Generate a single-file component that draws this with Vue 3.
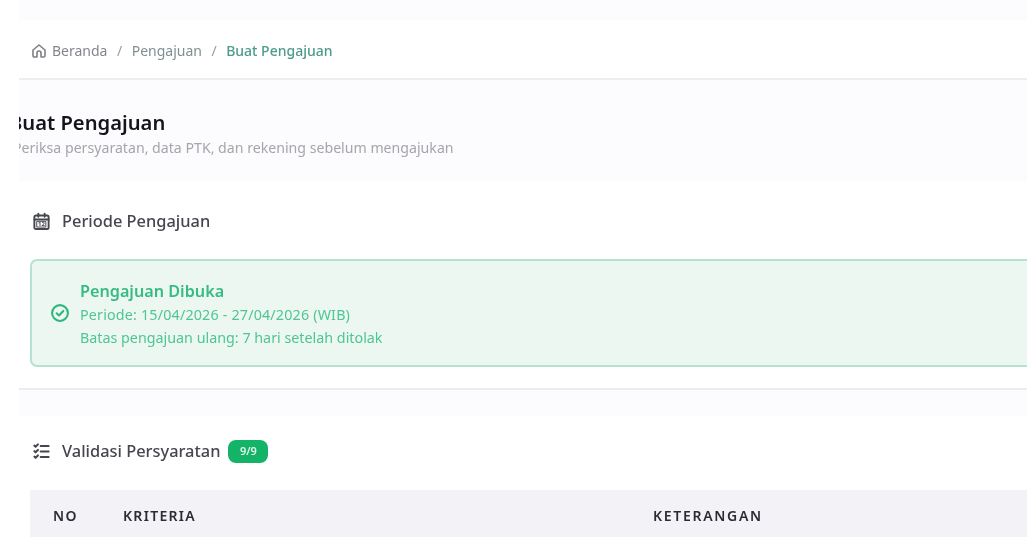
<template>
  <div class="app">
    <aside class="side"></aside>
    <main class="main">
      <div class="inner">
        <div class="topbar"></div>
        <nav class="crumbs">
          <svg class="home" width="16" height="16" viewBox="0 0 24 24" fill="none" stroke="currentColor" stroke-width="2.400" stroke-linecap="round" stroke-linejoin="round">
            <path d="M3 10.500 12 3l9 7.500V19a2 2 0 0 1-2 2h-4v-6a3 3 0 0 0-6 0v6H5a2 2 0 0 1-2-2z"/>
          </svg>
          <span>Beranda</span>
          <span class="sep">/</span>
          <span class="mid">Pengajuan</span>
          <span class="sep">/</span>
          <span class="now">Buat Pengajuan</span>
        </nav>

        <header class="head">
          <h1>Buat Pengajuan</h1>
          <p>Periksa persyaratan, data PTK, dan rekening sebelum mengajukan</p>
        </header>

        <section class="card period">
          <h2>
            <svg width="19" height="19" viewBox="0 0 24 24" fill="none" stroke="currentColor" stroke-width="2.400" stroke-linecap="round" stroke-linejoin="round">
              <rect x="3" y="4.500" width="18" height="17" rx="2"/>
              <path d="M3 9.500h18M8 2v4M16 2v4"/>
              <rect x="6.500" y="11.800" width="11" height="7.200" stroke-width="1.200"/>
              <text x="12" y="18" text-anchor="middle" class="cal-num">12</text>
            </svg>
            Periode Pengajuan
          </h2>
          <div class="alert">
            <svg class="check" width="20" height="20" viewBox="0 0 24 24" fill="none" stroke="currentColor" stroke-width="2.500" stroke-linecap="round" stroke-linejoin="round">
              <circle cx="12" cy="12" r="9.500"/>
              <path d="m8 12.300 2.800 2.700L16 9.500"/>
            </svg>
            <div class="alert-text">
              <strong>Pengajuan Dibuka</strong>
              <span class="range">Periode: 15/04/2026 - 27/04/2026 (WIB)</span>
              <span>Batas pengajuan ulang: 7 hari setelah ditolak</span>
            </div>
          </div>
        </section>

        <section class="card valid">
          <h2>
            <svg width="19" height="19" viewBox="0 0 24 24" fill="none" stroke="currentColor" stroke-width="2.600" stroke-linecap="round" stroke-linejoin="round">
              <path d="m3 4.500 1.500 1.500L7.500 3M3 11.500 4.500 13l3-3M3 18.500 4.500 20l3-3"/>
              <path d="M11 5h10M11 12h10M11 19h10"/>
            </svg>
            Validasi Persyaratan
            <span class="badge">9/9</span>
          </h2>
          <div class="thead">
            <span class="c-no">NO</span>
            <span class="c-kr">KRITERIA</span>
            <span class="c-ket">KETERANGAN</span>
          </div>
        </section>
      </div>
    </main>
  </div>
</template>

<script setup>
</script>

<style>
html, body {
  margin: 0;
  background: #fff;
  overflow: hidden;
}
</style>

<style scoped>
.app {
  display: flex;
  width: 1027px;
  height: 537px;
  overflow: hidden;
  font-family: "Noto Sans", "Open Sans", sans-serif;
  background: #fff;
}

.side {
  flex: 0 0 19px;
  background: #fff;
}

.main {
  flex: 1;
  min-width: 0;
  overflow: hidden;
  background: #fcfbfd;
}

.inner {
  width: 1100px;
  filter: blur(0.35px);
}

.topbar {
  height: 20px;
}

.crumbs {
  display: flex;
  align-items: center;
  height: 60px;
  padding: 3px 0 0 13px;
  background: #fff;
  border-bottom: 2px solid #eeeef0;
  box-sizing: border-box;
  font-size: 14px;
  color: #84868c;
}

.home {
  margin-right: 5px;
  margin-left: -1px;
  color: #7d7f85;
}

.sep {
  margin: 0 9.500px;
  color: #9a9ca3;
}

.mid {
  color: #7f9091;
}

.now {
  color: #4e9a8c;
  font-weight: 500;
}

.head {
  height: 102px;
  box-sizing: border-box;
  padding-top: 29px;
}

.head h1 {
  margin: 0 0 0 -10px;
  font-size: 20.200px;
  line-height: 26px;
  font-weight: 600;
  color: #14151c;
}

.head p {
  margin: 0 0 0 -6px;
  font-size: 14.150px;
  line-height: 26px;
  color: #a5a6ac;
}

.card {
  background: #fff;
  padding-left: 11px;
}

.period {
  height: 208px;
  box-sizing: border-box;
  padding-top: 27px;
  border-bottom: 2px solid #ececee;
}

.card h2 {
  display: flex;
  align-items: center;
  margin: 0;
  font-size: 16.400px;
  line-height: 24px;
  font-weight: 500;
  color: #45464e;
}

.card h2 svg {
  margin: 0 11px 0 2px;
}

.cal-num {
  font-family: "Noto Sans", sans-serif;
  font-size: 7.500px;
  font-weight: 700;
  fill: currentColor;
  stroke: none;
}

.alert {
  display: flex;
  align-items: center;
  gap: 10px;
  height: 108px;
  box-sizing: border-box;
  margin-top: 26px;
  padding-left: 18px;
  background: #edf7f2;
  border: 2px solid #b3e4d0;
  border-radius: 7px;
  color: #4fc594;
}

.check {
  color: #2fb67e;
}

.alert-text {
  display: flex;
  flex-direction: column;
  font-size: 14.300px;
  line-height: 23px;
}

.alert-text strong {
  font-size: 16.200px;
  line-height: 25px;
  font-weight: 600;
  color: #36bb82;
  position: relative;
  top: 1px;
}

.range {
  letter-spacing: 0.18px;
}

.valid {
  margin-top: 26px;
  height: 200px;
  box-sizing: border-box;
  padding-top: 23px;
}

.badge {
  display: inline-flex;
  align-items: center;
  justify-content: center;
  width: 40px;
  height: 23px;
  margin-left: 8px;
  border-radius: 8px;
  background: #14b368;
  color: #e2f6ec;
  font-size: 11px;
  font-weight: 600;
}

.thead {
  display: flex;
  align-items: center;
  height: 50px;
  margin-top: 27px;
  background: #f3f2f6;
  font-size: 14px;
  font-weight: 600;
  letter-spacing: 1.300px;
  color: #2b2c33;
}

.c-no {
  box-sizing: content-box;
  width: 47px;
  padding-left: 23px;
  margin-right: 23px;
}

.c-kr {
  width: 530px;
}

.c-ket {
  letter-spacing: 1.700px;
}
</style>
